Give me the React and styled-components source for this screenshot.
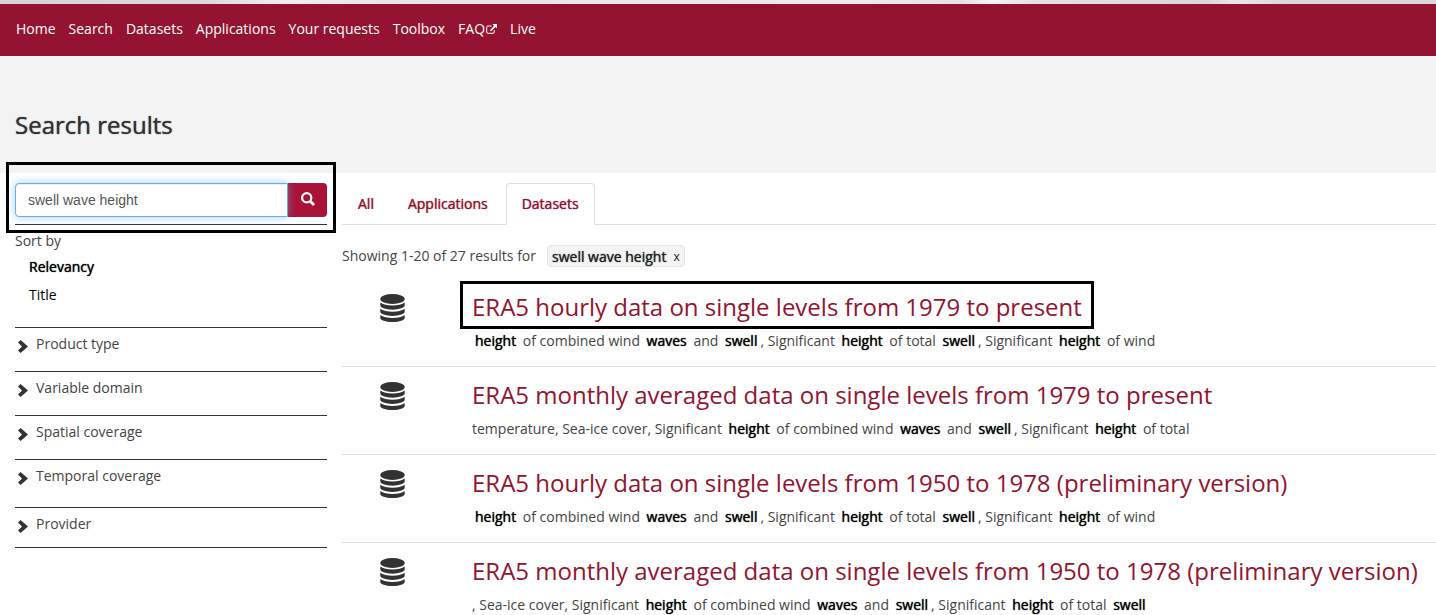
import React, { useState } from "react";
import styled, { createGlobalStyle, css } from "styled-components";

const GlobalStyle = createGlobalStyle`
  *, *::before, *::after { box-sizing: border-box; }
  body {
    margin: 0;
    background: #fff;
    color: #444;
    font: 400 14px/20px "Open Sans", "Noto Sans", sans-serif;
    overflow-x: hidden;
  }
  a { color: inherit; text-decoration: none; }
  button { font: inherit; color: inherit; }
`;

const heavier = css`
  text-shadow: 0 0 1px currentColor;
`;

const BannerStrip = styled.div`
  height: 4px;
  background: linear-gradient(90deg, #d5d5d5 0%, #dadada 14%, #f0f0f0 20%, #e6e6e6 28%, #ececec 60%, #e4e4e4 67%, #f6f6f6 69%, #e2e2e2 72%, #d8d8d8 84%, #e8e8e8 86%, #d8d8d8 90%, #d8d8d8 100%);
`;

const NavBar = styled.nav`
  display: flex;
  align-items: flex-start;
  gap: 13px;
  height: 52px;
  padding: 15px 16px;
  background: #941330;
  color: #fff;
  white-space: nowrap;
`;

const NavLink = styled.a`
  display: inline-flex;
  align-items: center;
  gap: 1px;
`;

const PageHeader = styled.header`
  height: 117px;
  padding: 52px 15px 0;
  background: #f3f3f3;
`;

const PageTitle = styled.h1`
  margin: 0;
  color: #333;
  font-size: 24px;
  line-height: 34px;
  font-weight: 400;
  ${heavier}
`;

const Columns = styled.div`
  display: grid;
  grid-template-columns: 312px minmax(0, 1fr);
  gap: 15px;
  padding: 10px 0 0 15px;
`;

const Marker = css`
  &::after {
    content: "";
    position: absolute;
    border: 3px solid #000;
    pointer-events: none;
  }
`;

const SearchForm = styled.form`
  position: relative;
  display: flex;
  padding-bottom: 7px;
  border-bottom: 1px solid #333;
  ${Marker}
  &::after { inset: -21px -9px -9px; }
`;

const SearchInput = styled.input`
  flex: 1;
  min-width: 0;
  height: 34px;
  padding: 6px 12px;
  border: 1px solid #66afe9;
  border-radius: 4px 0 0 4px;
  outline: none;
  color: #555;
  font: 14px/20px "Liberation Sans", Arial, sans-serif;
  position: relative;
  box-shadow: inset 0 1px 1px rgba(0, 0, 0, 0.08), 0 0 8px rgba(102, 175, 233, 0.6);
  z-index: 1;
`;

const SearchButton = styled.button`
  width: 39px;
  height: 34px;
  padding: 0 0 2px;
  border: 0;
  border-radius: 0 4px 4px 0;
  background: #a91338;
  color: #fff;
  display: grid;
  place-items: center;
`;

const SortSection = styled.section`
  height: 103px;
  padding-top: 6px;
  border-bottom: 1px solid #333;
`;

const SortTitle = styled.h2`
  margin: 0;
  font: inherit;
`;

const SortList = styled.ul`
  margin: 2px 0 0;
  padding: 0 0 0 14px;
  list-style: none;
  color: #000;
`;

const SortItem = styled.li`
  padding: 4px 0;
  ${(p) => p.$active && heavier}
`;

const Facet = styled.button`
  display: flex;
  align-items: flex-start;
  gap: 8px;
  width: 100%;
  height: ${(p) => p.$height}px;
  padding: 6px 0 0 3px;
  border: 0;
  border-bottom: 1px solid #333;
  background: none;
  text-align: left;
  svg { margin-top: 6px; }
`;

const TabList = styled.div`
  display: flex;
  height: 42px;
  border-bottom: 1px solid #ddd;
`;

const Tab = styled.button`
  height: 42px;
  margin-right: 2px;
  padding: 0 15px;
  border: 1px solid ${(p) => (p.$active ? "#ddd" : "transparent")};
  border-bottom-color: ${(p) => (p.$active ? "#fff" : "transparent")};
  border-radius: 4px 4px 0 0;
  background: ${(p) => (p.$active ? "#fff" : "none")};
  color: #941330;
  ${heavier}
`;

const Summary = styled.div`
  display: flex;
  align-items: center;
  gap: 11px;
  margin-top: 20px;
  height: 22px;
  line-height: 24px;
`;

const Chip = styled.span`
  display: inline-flex;
  align-items: center;
  gap: 7px;
  height: 22px;
  padding: 1px 4px 0;
  border: 1px solid #e6e6e6;
  border-radius: 4px;
  background: #f3f3f3;
  color: #222;
  ${heavier}
`;

const ChipClose = styled.button`
  padding: 0;
  border: 0;
  background: none;
  font-size: 12px;
  text-shadow: none;
`;

const ResultList = styled.ul`
  margin: 12px 0 0;
  padding: 0;
  list-style: none;
`;

const Result = styled.li`
  display: grid;
  grid-template-columns: 100px minmax(0, 1fr);
  column-gap: 30px;
  height: 88px;
  padding-top: 10px;
  border-bottom: 1px solid #ddd;
`;

const IconCell = styled.div`
  display: flex;
  justify-content: center;
  padding-top: 5px;
`;

const ResultTitle = styled.h3`
  position: relative;
  width: fit-content;
  margin: 0;
  color: #941330;
  font-size: 24px;
  line-height: 36px;
  font-weight: 400;
  white-space: nowrap;
  ${(p) => p.$marked && Marker}
  &::after { inset: -8px -12px -4px; }
`;

const Snippet = styled.p`
  margin: 6px 0 0;
  white-space: nowrap;
`;

const Hit = styled.mark`
  padding: 0 3px;
  background: none;
  color: #000;
  ${heavier}
`;

const ExternalIcon = () => (
  <svg width="11" height="10" viewBox="0 0 11 10" aria-hidden="true">
    <path d="M5.600 2H1.900Q.7 2 .7 3.200V8Q.7 9.300 1.900 9.300H7Q8.200 9.300 8.200 8V6" fill="none" stroke="currentColor" strokeWidth="1" />
    <path d="M6.500 0H11V4.500L9.500 3.100 5 7.300 3.900 6.200 8.100 1.700Z" fill="currentColor" />
  </svg>
);

const SearchIcon = () => (
  <svg width="14" height="14" viewBox="0 0 14 14" aria-hidden="true">
    <circle cx="5.700" cy="5.700" r="4.600" fill="none" stroke="currentColor" strokeWidth="2.200" />
    <path d="M9 9L13 13" stroke="currentColor" strokeWidth="2.800" />
  </svg>
);

const ChevronIcon = () => (
  <svg width="10" height="13" viewBox="0 0 10 13" aria-hidden="true">
    <path d="M0 2.600L2.600 0L10 6.500L2.600 13L0 10.400L4 6.500Z" fill="#333" />
  </svg>
);

const DatabaseIcon = () => (
  <svg width="25" height="28" viewBox="0 0 25 28" aria-hidden="true" fill="#333">
    <ellipse cx="12.500" cy="5" rx="12.200" ry="5" />
    <path d="M.3 8.600C5 12.600 20 12.600 24.700 8.600V11.600C24.700 13.600 19.500 15.700 12.500 15.700S.3 13.600 .3 11.600Z" />
    <path d="M.3 14.800C5 18.800 20 18.800 24.700 14.800V17.800C24.700 19.800 19.500 21.900 12.500 21.900S.3 19.800 .3 17.800Z" />
    <path d="M.3 21C5 25 20 25 24.700 21V24C24.700 26 19.500 28 12.500 28S.3 26 .3 24Z" />
  </svg>
);

const NAV = ["Home", "Search", "Datasets", "Applications", "Your requests", "Toolbox", "FAQ", "Live"];
const TABS = ["All", "Applications", "Datasets"];
const FACETS = [
  ["Product type", 44],
  ["Variable domain", 44],
  ["Spatial coverage", 44],
  ["Temporal coverage", 48],
  ["Provider", 40],
];

/* Matched search terms are wrapped in asterisks. */
const RESULTS = [
  {
    title: "ERA5 hourly data on single levels from 1979 to present",
    text: "*height* of combined wind *waves* and *swell*, Significant *height* of total *swell*, Significant *height* of wind",
    marked: true,
  },
  {
    title: "ERA5 monthly averaged data on single levels from 1979 to present",
    text: "temperature, Sea-ice cover, Significant *height* of combined wind *waves* and *swell*, Significant *height* of total",
  },
  {
    title: "ERA5 hourly data on single levels from 1950 to 1978 (preliminary version)",
    text: "*height* of combined wind *waves* and *swell*, Significant *height* of total *swell*, Significant *height* of wind",
  },
  {
    title: "ERA5 monthly averaged data on single levels from 1950 to 1978 (preliminary version)",
    text: ", Sea-ice cover, Significant *height* of combined wind *waves* and *swell*, Significant *height* of total *swell*",
  },
];

const renderHits = (text) =>
  text.split("*").map((part, i) => (i % 2 ? <Hit key={i}>{part}</Hit> : part));

export default function App() {
  const [query, setQuery] = useState("swell wave height");
  const [tab, setTab] = useState("Datasets");

  return (
    <>
      <GlobalStyle />
      <BannerStrip />
      <NavBar>
        {NAV.map((item) => (
          <NavLink href="#" key={item}>
            {item}
            {item === "FAQ" && <ExternalIcon />}
          </NavLink>
        ))}
      </NavBar>
      <PageHeader>
        <PageTitle>Search results</PageTitle>
      </PageHeader>
      <Columns>
        <aside>
          <SearchForm onSubmit={(e) => e.preventDefault()}>
            <SearchInput aria-label="Search" value={query} onChange={(e) => setQuery(e.target.value)} />
            <SearchButton aria-label="Submit search"><SearchIcon /></SearchButton>
          </SearchForm>
          <SortSection>
            <SortTitle>Sort by</SortTitle>
            <SortList>
              <SortItem $active><a href="#">Relevancy</a></SortItem>
              <SortItem><a href="#">Title</a></SortItem>
            </SortList>
          </SortSection>
          {FACETS.map(([label, height]) => (
            <Facet type="button" key={label} $height={height}>
              <ChevronIcon />
              {label}
            </Facet>
          ))}
        </aside>
        <main>
          <TabList role="tablist">
            {TABS.map((name) => (
              <Tab key={name} role="tab" aria-selected={tab === name} $active={tab === name} onClick={() => setTab(name)}>
                {name}
              </Tab>
            ))}
          </TabList>
          <Summary>
            <span>Showing 1-20 of 27 results for</span>
            <Chip>
              swell wave height
              <ChipClose aria-label="Remove filter">x</ChipClose>
            </Chip>
          </Summary>
          <ResultList>
            {RESULTS.map((r) => (
              <Result key={r.title}>
                <IconCell><DatabaseIcon /></IconCell>
                <div>
                  <ResultTitle $marked={r.marked}><a href="#">{r.title}</a></ResultTitle>
                  <Snippet>{renderHits(r.text)}</Snippet>
                </div>
              </Result>
            ))}
          </ResultList>
        </main>
      </Columns>
    </>
  );
}
